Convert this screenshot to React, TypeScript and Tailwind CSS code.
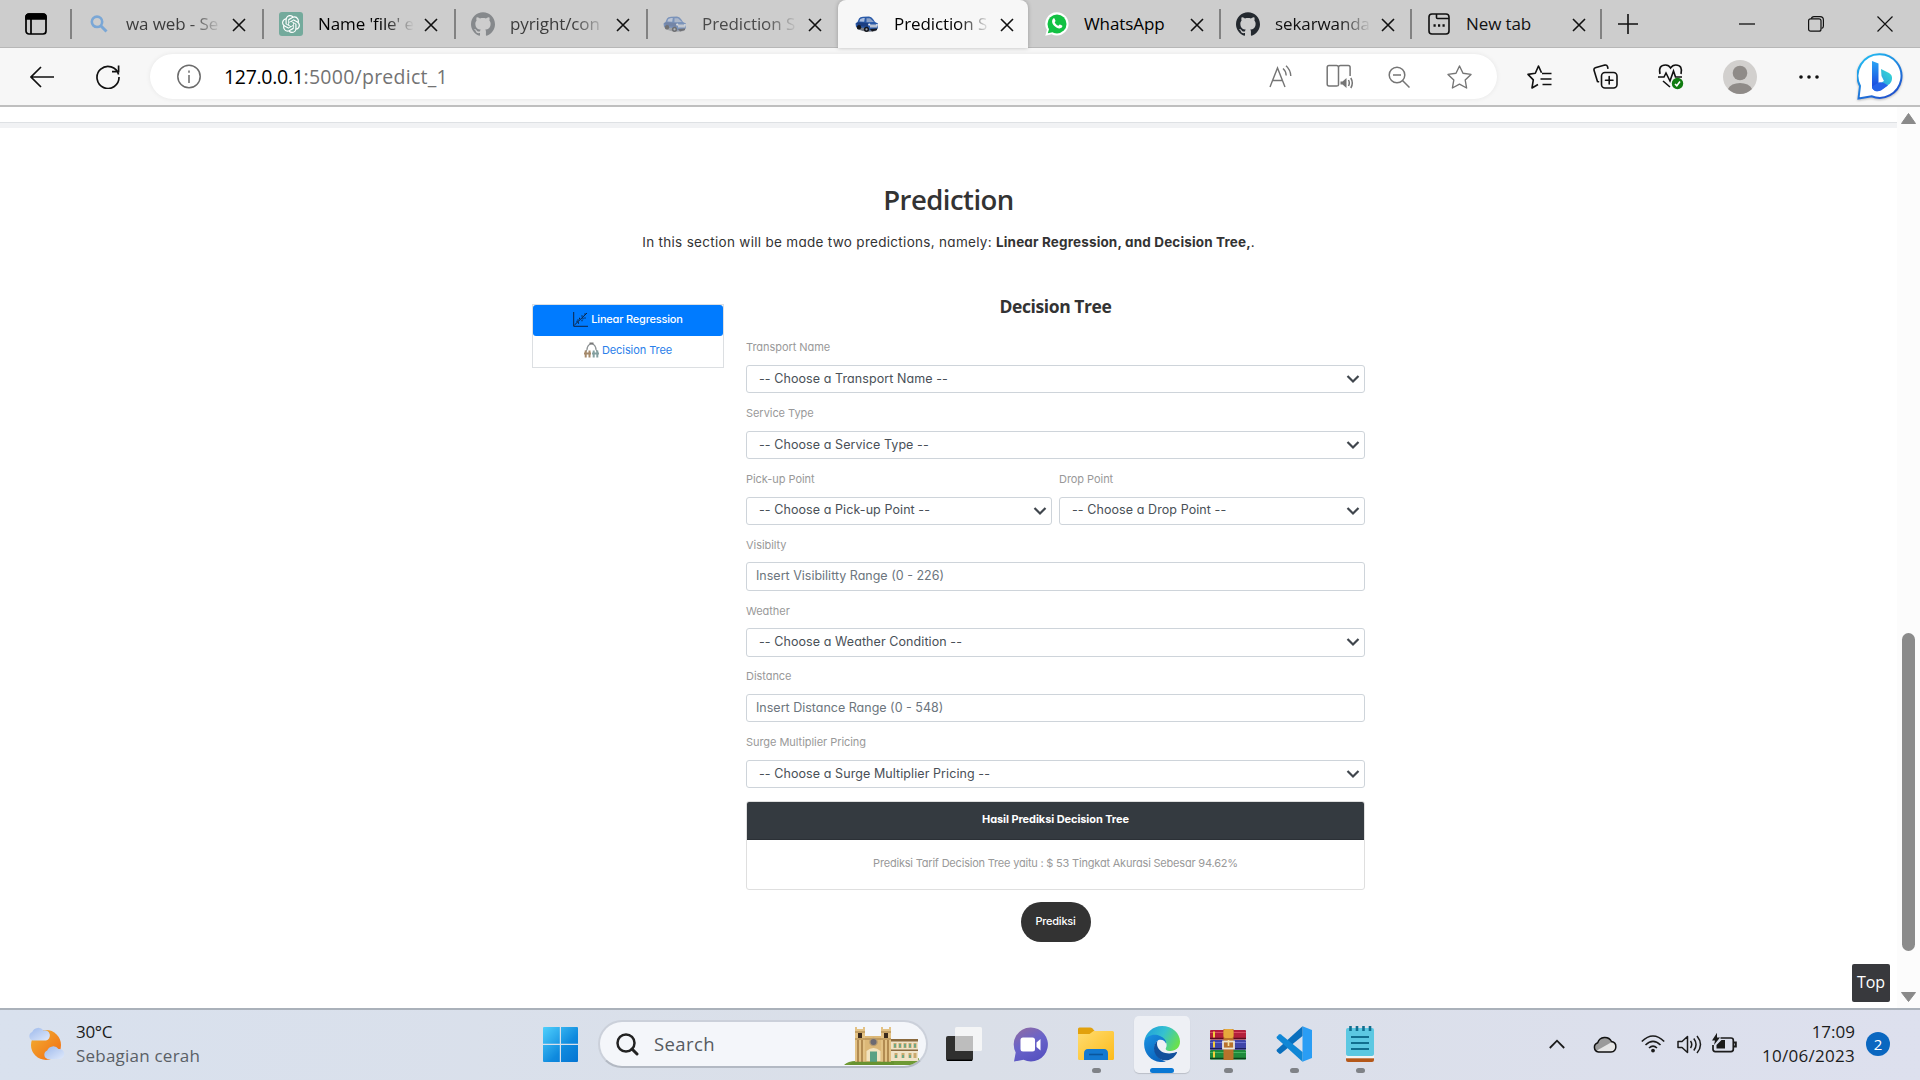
import type { ReactNode } from 'react';
import { SiGithub, SiOpenai } from 'react-icons/si';

const SEGOE = "font-['Open_Sans','Noto_Sans',sans-serif]";
const ROUND = "font-['Inter',sans-serif] [font-feature-settings:'cv11']";

/* ---------- tab strip ---------- */

function CarIcon({ dim = false }: { dim?: boolean }) {
  return (
    <svg width="24" height="17" viewBox="0 0 24 17" className={dim ? 'opacity-50' : ''}>
      <path d="M2 13 Q10 17 21 15 L23 12 L20 10 L3 10Z" fill="#777c86" />
      <path d="M.5 7.500 L2.500 6 L4 2.500 Q5 1 8 .8 L14 .6 Q16.500 .8 18 3 L20 6 L23 7.500 V12 L20 14 L13 14.500 L9 12 L1 11Z" fill="#2a5aa8" />
      <path d="M1 7 L4 6.300 L14 7 L13 11 L4 10Z" fill="#1c3f82" />
      <path d="M5.300 3 L8 2 L9.800 2 L9.200 5.800 L4.300 5.500Z" fill="#a9bcdd" />
      <path d="M11.500 2.200 L15 2.200 L19 6 L11.500 6.300Z" fill="#8ea4c9" />
      <circle cx="4" cy="11.300" r="2.200" fill="#15171c" />
      <circle cx="11.500" cy="13.300" r="2.600" fill="#15171c" />
      <circle cx="11.500" cy="13.300" r="1.100" fill="#9aa3b2" />
      <path d="M15 8.500 H22.500 V11.500 H15Z" fill="#b9c2d2" />
      <path d="M15 13 L22 12.500 V14 L17 15.500Z" fill="#16181f" />
      <circle cx="14.200" cy="8.600" r="1.100" fill="#e8edf5" />
      <circle cx="22" cy="8.800" r=".9" fill="#e8edf5" />
    </svg>
  );
}

function Close() {
  return (
    <svg width="14" height="14" viewBox="0 0 14 14" fill="none" stroke="#111" strokeWidth="1.600">
      <path d="M1 1 13 13M13 1 1 13" />
    </svg>
  );
}

type TabInfo = { w: string; sep: boolean; icon: ReactNode; text: string; tone: string; active?: boolean; fade?: boolean };

const TABS: TabInfo[] = [
  {
    w: 'w-[192px]', sep: true, text: 'wa web - Se', tone: 'text-[#3c3c3c]', fade: true,
    icon: (
      <svg width="18" height="18" viewBox="0 0 18 18" fill="none" stroke="#7aa7d6" strokeWidth="2.600">
        <circle cx="7" cy="6.800" r="5.200" />
        <path d="m11 11 5.500 5.500" strokeWidth="3" />
      </svg>
    ),
  },
  {
    w: 'w-[192px]', sep: true, text: "Name 'file' e", tone: 'text-black', fade: true,
    icon: (
      <span className="flex size-6 items-center justify-center rounded-[3px] bg-[#74aa9c]">
        <SiOpenai className="size-[18px] text-white" />
      </span>
    ),
  },
  { w: 'w-[192px]', sep: true, text: 'pyright/con', tone: 'text-[#3c3c3c]', fade: true, icon: <SiGithub className="size-6 text-[#86898c]" /> },
  { w: 'w-[192px]', sep: true, text: 'Prediction S', tone: 'text-[#4a4a4a]', fade: true, icon: <CarIcon dim /> },
  { w: 'w-[190px]', sep: false, text: 'Prediction S', tone: 'text-black', fade: true, icon: <CarIcon />, active: true },
  {
    w: 'w-[191px]', sep: false, text: 'WhatsApp', tone: 'text-black',
    icon: (
      <svg width="24" height="24" viewBox="0 0 24 24">
        <path d="M12 .3a11.600 11.600 0 1 1-5.400 21.900L.3 23.800l1.600-6A11.600 11.600 0 0 1 12 .3Z" fill="#fff" />
        <circle cx="12" cy="11.900" r="9.500" fill="#12c143" />
        <path d="M2.800 21.300 4.600 15l4.200 5Z" fill="#12c143" />
        <path d="M8.300 6.600c.4-.4 1-.4 1.300.2l.9 2c.2.5-.6 1.200-.8 1.500.8 1.700 2 2.800 3.700 3.500.5-.4 1-1.500 1.600-1.200l2 1c.6.3.3 1.500-.2 2-1.500 1.300-3.500.9-5.400-.2-2.300-1.300-4.100-3.600-4.300-5.500-.1-1.300.5-2.700 1.200-3.300Z" fill="#fff" />
      </svg>
    ),
  },
  { w: 'w-[191px]', sep: true, text: 'sekarwanda', tone: 'text-[#111]', fade: true, icon: <SiGithub className="size-6 text-[#24292f]" /> },
  {
    w: 'w-[190px]', sep: true, text: 'New tab', tone: 'text-[#111]',
    icon: (
      <svg width="22" height="22" viewBox="0 0 22 22" fill="none" stroke="#111" strokeWidth="1.600">
        <rect x="1" y="1" width="20" height="20" rx="3" />
        <path d="M8.500 1v3.500q0 1 1 1H21" />
        <path d="M5.500 12.500h2.200M10 12.500h2.200M14.500 12.500h2.200" strokeWidth="2.400" />
      </svg>
    ),
  },
];

function Tab({ t }: { t: TabInfo }) {
  return (
    <div
      className={`${t.w} flex h-12 shrink-0 items-center ${
        t.active ? 'rounded-t-lg bg-[#f7f7f7] shadow-[0_0_4px_rgba(0,0,0,0.25)]' : ''
      }`}
    >
      <span className={`h-[30px] w-[2px] ${t.sep ? 'bg-[#828282]' : ''}`} />
      <span className="ml-[15px] flex w-6 justify-center">{t.icon}</span>
      <span
        className={`ml-[15px] w-[97px] text-[17px] leading-6 tracking-[-0.1px] whitespace-nowrap ${t.tone} ${
          t.fade ? '[mask-image:linear-gradient(to_right,#000_66%,transparent_99%)]' : ''
        }`}
      >
        {t.text}
      </span>
      <span className="mt-[2px] ml-[9px]">
        <Close />
      </span>
    </div>
  );
}

function TabStrip() {
  return (
    <div className="flex h-12 items-center bg-[#cdcdcd] shadow-[inset_0_-1px_0_#b7b7b7]">
      <div className="flex w-[70px] justify-center pl-[2px]">
        <svg width="22" height="22" viewBox="0 0 22 22" fill="none" stroke="#000" strokeWidth="1.700">
          <rect x="1" y="1" width="20" height="20" rx="3" />
          <path d="M1 6V4a3 3 0 0 1 3-3h14a3 3 0 0 1 3 3v2Z" fill="#000" />
          <path d="M6 6v15" />
        </svg>
      </div>
      {TABS.map((t, i) => (
        <Tab key={i} t={t} />
      ))}
      <span className="h-[30px] w-[2px] bg-[#828282]" />
      <svg className="ml-[16px]" width="20" height="20" viewBox="0 0 20 20" stroke="#111" strokeWidth="1.600">
        <path d="M10 0v20M0 10h20" />
      </svg>
      <svg className="ml-[101px]" width="16" height="16" viewBox="0 0 16 16" stroke="#111" strokeWidth="1.300">
        <path d="M0 8h16" />
      </svg>
      <svg className="ml-[53px]" width="16" height="16" viewBox="0 0 16 16" fill="none" stroke="#111" strokeWidth="1.200">
        <rect x=".6" y="2.800" width="12.400" height="12.400" rx="2" />
        <path d="M3.400 2.800Q3.600.6 6 .6h6q3.400 0 3.400 3.400v6q0 2-1.800 2.500" />
      </svg>
      <svg className="ml-[53px]" width="16" height="16" viewBox="0 0 16 16" stroke="#111" strokeWidth="1.200">
        <path d="M.5.5l15 15M15.500.5l-15 15" />
      </svg>
    </div>
  );
}

/* ---------- address row ---------- */

function Toolbar() {
  return (
    <div className="flex h-[57px] items-center bg-[#f7f7f7]">
      <svg className="ml-[30px]" width="24" height="22" viewBox="0 0 24 22" fill="none" stroke="#111" strokeWidth="1.700">
        <path d="M24 11H1M11 1 1 11l10 10" />
      </svg>
      <svg className="ml-[42px]" width="24" height="25" viewBox="0 0 24 25" fill="none" stroke="#111" strokeWidth="1.700">
        <path d="M22.600 10.500A11 11 0 1 0 23 13M22.600 1.500v6.200H16" />
      </svg>
      <div className="ml-[30px] flex h-[45px] w-[1347px] items-center rounded-full bg-white shadow-[0_0_5px_rgba(0,0,0,0.07)]">
        <svg className="ml-[27px]" width="24" height="25" viewBox="0 0 24 25" fill="none" stroke="#6b6b6b" strokeWidth="1.500">
          <circle cx="12" cy="12.500" r="11.200" />
          <path d="M12 11v8M12 6.500v2.200" />
        </svg>
        <div className="ml-[23px] flex-1 text-[19.5px] leading-7 whitespace-nowrap text-[#737373]">
          <span className="tracking-[-0.3px] text-black">127.0.0.1</span>
          <span className="tracking-[0.25px]">:5000/predict_1</span>
        </div>
        <div className="mr-[25px] flex items-center text-[#757575]">
          <svg width="24" height="23" viewBox="0 0 24 23" fill="none" stroke="currentColor" strokeWidth="1.400">
            <path d="M1 22 8.500 3 16 22M3.600 15.500h9.800" />
            <path d="M14 3.500q3 2.500 3.200 7M17 .8q4.500 4 4.800 10.200" />
          </svg>
          <svg className="ml-[33px]" width="28" height="26" viewBox="0 0 28 26" fill="none" stroke="currentColor" strokeWidth="1.500">
            <path d="M12.500 3.500q0-2-2-2H3q-1.800 0-1.800 2V20q0 2 1.800 2h7.500q2 0 2-1V3.500q0-2 2-2h7.800q1.800 0 1.800 2V12M12.500 21v-1" />
            <path d="M14.500 17.500h2l4-3.500v10l-4-3.500h-2Z" fill="currentColor" stroke="none" />
            <path d="M22.500 16q1.600 3 0 6M24.800 14q3 5 0 10" />
          </svg>
          <svg className="ml-[34px]" width="22" height="22" viewBox="0 0 22 22" fill="none" stroke="currentColor" strokeWidth="1.500">
            <circle cx="9" cy="9" r="7.800" />
            <path d="m14.500 14.500 7 7M5 9h8" />
          </svg>
          <svg className="ml-[37px]" width="25" height="24" viewBox="0 0 25 24" fill="none" stroke="currentColor" strokeWidth="1.400" strokeLinejoin="round">
            <path d="m12.500 1 3.500 7.300 8 1.100-5.800 5.600 1.400 8-7.100-3.800L5.400 23l1.400-8L1 9.400l8-1.100Z" />
          </svg>
        </div>
      </div>
      <svg className="ml-[30px]" width="25" height="24" viewBox="0 0 25 24" fill="none" stroke="#111" strokeWidth="1.600" strokeLinejoin="round">
        <path d="M14.500 7.800 11.500 1 8.300 8.300 1 9.400l5.300 5.500L5 23l6-3.500M15 8.500h9.500M13.500 14H24.500M15.500 19.500h9" />
      </svg>
      <svg className="ml-[41px]" width="25" height="25" viewBox="0 0 25 25" fill="none" stroke="#111" strokeWidth="1.600" strokeLinecap="round">
        <rect x="8.500" y="8.500" width="15.500" height="15.500" rx="3.500" />
        <path d="M16.200 12.500v7.500M12.500 16.200H20M5.500 17.800l-1-.3-3.400-11q-.6-2 1.200-2.700l9.500-2.700q2-.5 2.700 1.400l.4 1.700" />
      </svg>
      <svg className="ml-[40px]" width="26" height="26" viewBox="0 0 26 26" fill="none" stroke="#111" strokeWidth="1.600">
        <path d="M2 10q-2-9 5.500-9 3.500 0 5 3 2-3 5.300-3Q25 1 23 10M0 13h6l2-4 4 8 3.500-10 2 6H24M5 17l7 6" />
        <circle cx="19.500" cy="19.500" r="5.700" fill="#117c10" stroke="none" />
        <path d="m17 20 1.800 1.700 3.200-4.200" stroke="#fff" />
      </svg>
      <svg className="ml-[39px]" width="34" height="34" viewBox="0 0 34 34">
        <circle cx="17" cy="17" r="17" fill="#d2d0ce" />
        <circle cx="17" cy="13" r="7.300" fill="#8f8b88" />
        <path d="M5 29a12.500 8.500 0 0 1 24 0 17 17 0 0 1-24 0Z" fill="#8f8b88" />
      </svg>
      <svg className="ml-[42px]" width="20" height="4" viewBox="0 0 20 4" fill="#111">
        <circle cx="2" cy="2" r="1.800" />
        <circle cx="10" cy="2" r="1.800" />
        <circle cx="18" cy="2" r="1.800" />
      </svg>
      <svg className="ml-[38px] drop-shadow-[0_1px_1px_rgba(0,0,0,0.25)]" width="46" height="47" viewBox="0 0 46 47">
        <defs>
          <linearGradient id="bingRing" x1="0" y1="0" x2=".6" y2="1">
            <stop offset="0" stopColor="#22c4f5" />
            <stop offset="1" stopColor="#1f55cf" />
          </linearGradient>
          <linearGradient id="bingStem" x1="0" y1="0" x2="0" y2="1">
            <stop offset="0" stopColor="#2aa5f5" />
            <stop offset="1" stopColor="#1a44dd" />
          </linearGradient>
          <linearGradient id="bingBowl" x1="1" y1="0" x2="0" y2="1">
            <stop offset="0" stopColor="#35e0d0" />
            <stop offset="1" stopColor="#2a7af0" />
          </linearGradient>
        </defs>
        <path d="M23 1.200a21.800 21.800 0 1 1-8.500 42L1.500 45.500 3 33A21.800 21.800 0 0 1 23 1.200Z" fill="#fff" stroke="url(#bingRing)" strokeWidth="2" />
        <path d="m15 8 6.500 2.500v20L15 35Z" fill="url(#bingStem)" />
        <path d="m24 16 8 4q3.500 2 3 6-.5 4-4 6l-7 5q-3 2-6 1l-3-3 12-7-2.500-5Z" fill="url(#bingBowl)" />
        <path d="m15 33.500 6.500-4q4-1 9.500 3l-7 5Q18 40 15 35Z" fill="#2563e8" />
      </svg>
    </div>
  );
}

/* ---------- prediction page ---------- */

function Chevron() {
  return (
    <svg className="ml-auto mr-[4px]" width="14" height="10" viewBox="0 0 14 10" fill="none" stroke="#40464d" strokeWidth="2.200">
      <path d="m1.500 2 5.500 5.500L12.500 2" />
    </svg>
  );
}

function Field({ label, value, input = false }: { label: string; value: string; input?: boolean }) {
  return (
    <div className="h-[65.6px] flex-1">
      <div className="h-[18px] text-[11px] leading-[18px] tracking-[-0.05px] text-[#999]">{label}</div>
      <div
        className={`mt-[8.5px] flex h-[28.5px] items-center rounded-[3px] border border-[#ced4da] bg-white text-[12.5px] whitespace-nowrap ${
          input ? 'pl-[9px] text-[#6c757d]' : 'pl-[12px] tracking-[0.08px] text-[#495057]'
        }`}
      >
        <span>{value}</span>
        {!input && <Chevron />}
      </div>
    </div>
  );
}

function ModelList() {
  return (
    <div className="mt-[9.5px] h-[64px] w-[192px] shrink-0 border border-[#dcdfe2] text-[11px]">
      <div className="flex h-[31px] items-center justify-center rounded-[3px] bg-[#007bff] pb-px font-medium tracking-[-0.2px] text-white">
        <svg className="mr-[3px]" width="15" height="15" viewBox="0 0 15 15" fill="none" stroke="#0d2547" strokeWidth="1">
          <path d="M.7 0v14.300H15M1.500 13 14 1" />
          <path d="M3.500 9.500h1M6 6.500h1M5 11h1M8.500 4h1M8.500 8.500h1M11.500 2h1M11.500 6h1M9.500 6.500h1M4.500 8h1" strokeWidth="1.500" />
        </svg>
        Linear Regression
      </div>
      <div className="flex h-[29px] items-center justify-center tracking-[-0.08px] text-[#2a80ea]">
        <svg className="mr-[3px]" width="15" height="16" viewBox="0 0 15 16" fill="none" strokeWidth="1.300">
          <path d="M7.500 1.500Q3 3 3 8M7.500 1.500Q12 3 12 8M3.500 6.500 1.500 10M11.500 6.500l2 3.500" stroke="#8b9092" />
          <path d="M5.500 1.500h4" stroke="#777" strokeWidth="2" />
          <path d="M1.700 8.500v7M5.500 8.500v7M0 11.500h7" stroke="#a5896a" strokeWidth="2" />
          <path d="M9.700 8.500v7M13.300 8.500v7M8 11.500h7" stroke="#84a0a0" strokeWidth="2" />
        </svg>
        Decision Tree
      </div>
    </div>
  );
}

function Page() {
  return (
    <div className="flex h-[901px] bg-white">
      <div className="flex min-w-0 flex-1 flex-col">
        <div className="mt-[15px] h-[6px] shrink-0 border-t border-[#dee1e4] bg-[#f1f2f4]" />
        <h2 className="mt-[52px] h-10 text-center text-[27.5px] leading-10 font-semibold tracking-[-0.52px] text-[#333]">Prediction</h2>
        <p className={`${ROUND} mt-[10px] h-6 text-center text-[13.5px] leading-6 whitespace-nowrap text-[#333]`}>
          <span className="tracking-[0.3px]">In this section will be made two predictions, namely: </span>
          <b className="tracking-[0.15px]">Linear Regression, and Decision Tree,</b>.
        </p>
        <div className={`${ROUND} mx-auto mt-[40px] flex w-[833px] flex-1 justify-between`}>
          <ModelList />
          <div className="flex w-[619px] flex-col">
            <h3 className={`${SEGOE} mb-[20.4px] h-6 text-center text-[17.5px] leading-6 font-bold tracking-[-0.42px] text-[#333]`}>Decision Tree</h3>
            <Field label="Transport Name" value="-- Choose a Transport Name --" />
            <Field label="Service Type" value="-- Choose a Service Type --" />
            <div className="flex gap-[7px]">
              <Field label="Pick-up Point" value="-- Choose a Pick-up Point --" />
              <Field label="Drop Point" value="-- Choose a Drop Point --" />
            </div>
            <Field label="Visibilty" value="Insert Visibilitty Range (0 - 226)" input />
            <Field label="Weather" value="-- Choose a Weather Condition --" />
            <Field label="Distance" value="Insert Distance Range (0 - 548)" input />
            <Field label="Surge Multiplier Pricing" value="-- Choose a Surge Multiplier Pricing --" />
            <div className="mt-[2px] h-[89px] shrink-0 overflow-hidden rounded-[3px] border border-[#dfdfdf] text-center text-[11px]">
              <div className="h-[38px] border-b border-[#2b3036] bg-[#343a40] leading-[35px] font-bold tracking-[-0.08px] text-white">
                Hasil Prediksi Decision Tree
              </div>
              <div className="leading-[46px] tracking-[-0.2px] text-[#999]">
                Prediksi Tarif Decision Tree yaitu : $ 53 Tingkat Akurasi Sebesar 94.62%
              </div>
            </div>
            <div className="mx-auto mt-[12px] flex h-[40px] w-[70px] shrink-0 items-center justify-center rounded-[20px] bg-[#333] pb-[2px] text-[11px] font-medium tracking-[-0.25px] text-white">
              Prediksi
            </div>
            <div className="flex-1" />
          </div>
        </div>
      </div>
      <div className="relative flex w-[23px] flex-col items-center bg-[#fcfcfc]">
        <svg className="mt-[6px]" width="15" height="11" viewBox="0 0 15 11">
          <path d="M7.500.5 14.500 10.500H.5Z" fill="#8a8a8a" stroke="#8a8a8a" strokeLinejoin="round" />
        </svg>
        <div className="mt-[509px] h-[318px] w-[13px] rounded-full bg-[#8b8b8b]" />
        <svg className="mt-[41px]" width="15" height="10" viewBox="0 0 15 10">
          <path d="M7.500 9.500.5.5h14Z" fill="#8a8a8a" stroke="#8a8a8a" strokeLinejoin="round" />
        </svg>
        <div className="absolute top-[857px] right-[30px] flex h-[38px] w-[38px] items-center justify-center rounded-[2px] bg-[#38393d] pb-[3px] text-[16px] text-white">
          Top
        </div>
      </div>
    </div>
  );
}

/* ---------- taskbar ---------- */

function Weather() {
  return (
    <svg width="37" height="34" viewBox="0 0 37 34">
      <defs>
        <linearGradient id="sun" x1="0" y1="0" x2="1" y2="1">
          <stop offset="0" stopColor="#f2b233" />
          <stop offset="1" stopColor="#f26a12" />
        </linearGradient>
        <linearGradient id="cloud" x1="0" y1="0" x2="1" y2="1">
          <stop offset="0" stopColor="#9db9ec" />
          <stop offset="1" stopColor="#dfe9fb" />
        </linearGradient>
      </defs>
      <circle cx="18" cy="18" r="15" fill="url(#sun)" />
      <path d="M4.500 13.500a4.500 4.500 0 0 1-.3-8.500A6.500 6.500 0 0 1 15.500 3.500a5 5 0 0 1 2.500 10Z" fill="url(#cloud)" />
      <path d="M19.500 32a4.500 4.500 0 0 1-.3-8.500 6.500 6.500 0 0 1 11.300-1.500A5 5 0 0 1 32 32Z" fill="url(#cloud)" />
    </svg>
  );
}

function Building() {
  return (
    <svg width="76" height="39" viewBox="0 0 76 39">
      <path d="M0 38q4-4 12-4h56l7-3q0 4-4 7Z" fill="#6f9a35" />
      <rect x="47" y="13" width="27" height="21" fill="#efe3c8" />
      <path d="M47 12h27v2.500H47ZM47 22.500h27V24H47Z" fill="#8a6a3f" />
      <path d="M51 16v5M56 16v5M61 16v5M66 16v5M71 16v5M52 26v5M59 26v5M66 26v5M71 26v5" stroke="#c9a96d" strokeWidth="3" />
      <path d="M51 17v3.500M56 17v3.500M61 17v3.500M66 17v3.500M71 17v3.500M52 28v3M59 28v3M66 28v3" stroke="#58a88c" strokeWidth="1.600" />
      <path d="M20 9h19v26H20Z" fill="#dcb878" />
      <path d="M11 0h2v2h6V0h2v35H11Z" fill="#e3c285" />
      <path d="M37 0h2v2h6V0h2v35H37Z" fill="#e3c285" />
      <path d="M14 13v22M18 13v22M40 13v22M44 13v22" stroke="#a67e45" strokeWidth="1.600" />
      <path d="M11 4.500h10v1H11ZM37 4.500h10v1H37ZM11 11.500h36v1H11Z" fill="#a67e45" />
      <rect x="14" y="6" width="4" height="5" fill="#3b2a1c" />
      <rect x="40" y="6" width="4" height="5" fill="#3b2a1c" />
      <circle cx="29.500" cy="15" r="4.300" fill="#b59a70" />
      <circle cx="29.500" cy="15" r="3" fill="#6c6a72" />
      <path d="M22.500 34V24q7-6 14 0v10Z" fill="#f2e3c0" />
      <path d="M26 35V24.500h7V35Z" fill="#5aa184" />
      <path d="M9 34.500h41V38H5Z" fill="#5f8a2c" opacity=".45" />
    </svg>
  );
}

function ChatIcon() {
  return (
    <svg width="35" height="35" viewBox="0 0 35 35">
      <defs>
        <linearGradient id="chat" x1=".2" y1="0" x2=".7" y2="1">
          <stop offset="0" stopColor="#8d6aa5" />
          <stop offset=".45" stopColor="#6a64c9" />
          <stop offset="1" stopColor="#5550c0" />
        </linearGradient>
      </defs>
      <path d="M17.500.5a17 17 0 1 1-7 32.300L1 34.500l1.700-9A17 17 0 0 1 17.500.5Z" fill="url(#chat)" />
      <rect x="7.500" y="10.500" width="14.500" height="14" rx="2.500" fill="#fff" />
      <path d="m23.500 15.500 4-3.500v11.500l-4-3.500Z" fill="#fff" />
    </svg>
  );
}

function FolderIcon() {
  return (
    <svg width="36" height="34" viewBox="0 0 36 34">
      <defs>
        <linearGradient id="folder" x1="0" y1="0" x2="1" y2="1">
          <stop offset="0" stopColor="#ffdc70" />
          <stop offset="1" stopColor="#fdbb1b" />
        </linearGradient>
      </defs>
      <path d="M0 2q0-1.500 1.500-1.500H12q1.500 0 2.500 1l2.500 3V10H0Z" fill="#e2a10c" />
      <path d="M0 7h11.500l4-3H34.500Q36 4 36 5.500v26q0 1.500-1.500 1.500h-33Q0 33 0 31.500Z" fill="url(#folder)" />
      <path d="M6 33v-6.500Q6 22 10 22h16q4 0 4 4.500V33Z" fill="#1379d0" />
      <path d="M11 27.500h14" stroke="#0a569c" strokeWidth="1.600" />
    </svg>
  );
}

function EdgeIcon() {
  return (
    <svg width="36" height="36" viewBox="0 0 36 36">
      <defs>
        <linearGradient id="edgeTop" x1="0" y1=".2" x2="1" y2=".6">
          <stop offset="0" stopColor="#1f9fdc" />
          <stop offset=".5" stopColor="#35c1d0" />
          <stop offset="1" stopColor="#6be14b" />
        </linearGradient>
        <linearGradient id="edgeLeft" x1="0" y1="0" x2=".6" y2="1">
          <stop offset="0" stopColor="#1b93e2" />
          <stop offset="1" stopColor="#0a63bd" />
        </linearGradient>
      </defs>
      <path d="M.3 15.500C1.500 6.500 9 0 18 0c10.500 0 18 7.500 18 15.500 0 6-4.500 9.500-9.500 9.500-4 0-5.500-1.500-4.500-3.200 2-3.500-.5-8-6-10C9 10 3.500 11 .3 15.500Z" fill="url(#edgeTop)" />
      <path d="M.3 15.500C3 8.500 11 7.500 16 10c5 2.200 6.500 5 6 7.500-1-3.500-4.500-4.500-7.500-3.500-5 3-5.500 11.500-.5 16.500 2 2.500 5 4.500 8 5C10 38.500-1.500 29 .3 15.500Z" fill="url(#edgeLeft)" />
      <path d="M13.500 14.700c-5 4.300-4.500 12 .5 16.800 5.500 5 15 3.500 19-4.800.2-.7-.3-1-.9-.7C25.500 29 15.500 27.500 13.300 20c-.5-2-.3-4 .2-5.300Z" fill="#12509c" />
    </svg>
  );
}

function RarIcon() {
  return (
    <svg width="36" height="33" viewBox="0 0 36 33">
      <rect x="0" y="2" width="36" height="9.500" rx="1" fill="#b3203c" />
      <path d="M0 4.500h36" stroke="#d94c62" strokeWidth="1.200" />
      <path d="M0 10.500h36" stroke="#5c0d1e" strokeWidth="1.600" />
      <rect x="0" y="12" width="36" height="9.500" rx="1" fill="#3f45a8" />
      <path d="M0 14.500h36" stroke="#6b71d0" strokeWidth="1.200" />
      <path d="M0 20.800h36" stroke="#1b1e5d" strokeWidth="1.600" />
      <rect x="0" y="22" width="36" height="9.500" rx="1" fill="#1f8a3b" />
      <path d="M0 24.500h36" stroke="#46b462" strokeWidth="1.200" />
      <path d="M0 30.500h36" stroke="#0b421a" strokeWidth="1.600" />
      <path d="M4 3.500v6M4 13.500v6M4 23.500v6" stroke="#f5cf3e" strokeWidth="2" />
      <rect x="13.500" y="1" width="10" height="31" fill="#b9722b" />
      <rect x="13.500" y="1" width="10" height="9" rx="2" fill="#e6a93b" />
      <rect x="13" y="13.500" width="11" height="7" fill="none" stroke="#e9e4da" strokeWidth="1.800" />
      <path d="M18.500 12v6" stroke="#f6e2a0" strokeWidth="1.600" />
    </svg>
  );
}

function CodeIcon() {
  return (
    <svg width="36" height="36" viewBox="0 0 36 36">
      <path d="M26.500.3 36 4v28l-9.500 3.800Z" fill="#2a9df4" />
      <path d="M26.500.3 1 23.500q-1 1 0 2l2 2q1 .8 2 0L26.500 10Z" fill="#0a6fbd" />
      <path d="M26.500 35.800 1 12.500q-1-1 0-2l2-2q1-.8 2 0L26.500 26Z" fill="#1087d6" />
    </svg>
  );
}

function NotepadIcon() {
  return (
    <svg width="28" height="36" viewBox="0 0 28 36">
      <path d="M0 31h28v3q0 2-2 2H2q-2 0-2-2Z" fill="#b4581a" />
      <path d="M0 29h28v3.300H0Z" fill="#f3f3f3" />
      <rect x="0" y="2" width="28" height="28" rx="2" fill="#5cc8e2" />
      <path d="M4.500 0v5M11 0v5M17.500 0v5M24 0v5" stroke="#116e8f" strokeWidth="2.600" />
      <path d="M5 11h18M5 17h18M5 23h18" stroke="#116e8f" strokeWidth="2" />
    </svg>
  );
}

function TaskButton({ children, state = 'none' }: { children: ReactNode; state?: 'none' | 'open' | 'active' }) {
  return (
    <div
      className={`flex h-[57px] w-[56px] flex-col items-center rounded-[5px] pt-[10px] ${
        state === 'active' ? 'bg-[#eef0f5] shadow-[0_1px_1px_rgba(0,0,0,0.15)]' : ''
      }`}
    >
      <div className="flex h-9 items-center justify-center">{children}</div>
      {state === 'open' && <span className="mt-[6px] h-[5px] w-[9px] rounded-full bg-[#7f8287]" />}
      {state === 'active' && <span className="mt-[6px] h-[5px] w-6 rounded-full bg-[#0a78d4]" />}
    </div>
  );
}

function Taskbar() {
  return (
    <div className="flex h-[72px] items-start border-t-2 border-[#aab1ba] bg-gradient-to-r from-[#d9e1ee] via-[#dadfe8] to-[#dde0ee] pt-[6px]">
      <div className="flex w-[543px] shrink-0 items-center pt-[4px] pl-[28px] text-[17px]">
        <Weather />
        <div className="ml-[11px] leading-6">
          <div className="tracking-[-0.3px] text-[#1b1b1b]">30°C</div>
          <div className="tracking-[0.22px] text-[#5a5f66]">Sebagian cerah</div>
        </div>
      </div>
      <svg className="mt-[11px]" width="35" height="35" viewBox="0 0 35 35">
        <defs>
          <linearGradient id="win" x1="0" y1="0" x2="1" y2="1">
            <stop offset="0" stopColor="#4fd0fc" />
            <stop offset=".6" stopColor="#0f8ade" />
            <stop offset="1" stopColor="#0474d2" />
          </linearGradient>
        </defs>
        <path d="M1 0h15.800v16.800H0V1Q0 0 1 0ZM18 0h16q1 0 1 1v15.800H18ZM0 18h16.800v17H1q-1 0-1-1ZM18 18h17v16q0 1-1 1H18Z" fill="url(#win)" />
      </svg>
      <div className="mt-[4px] ml-[20px] flex h-[48px] w-[330px] shrink-0 items-center overflow-hidden rounded-full border-2 border-[#cbd0da] border-b-[#b3b9c3] bg-[#f4f6fa]">
        <svg className="ml-[16px]" width="23" height="23" viewBox="0 0 23 23" fill="none" stroke="#222" strokeWidth="2.500" strokeLinecap="round">
          <circle cx="10" cy="10" r="8.500" />
          <path d="m16 16 5 5" strokeWidth="3" />
        </svg>
        <span className="ml-[15px] text-[18.5px] tracking-[0.38px] text-[#565a60]">Search</span>
        <span className="mt-[5px] mr-[6px] ml-auto">
          <Building />
        </span>
      </div>
      <div className="ml-[8px] flex gap-[10px]">
        <TaskButton>
          <svg width="36" height="35" viewBox="0 0 36 35">
            <rect x="0" y="9" width="27" height="25" rx="2" fill="#30302f" />
            <path d="M1 33.300h25" stroke="#000" strokeWidth="1.400" />
            <rect x="9" y="0" width="27" height="24" rx="1.500" fill="#f6f6f6" opacity=".92" />
            <path d="M9 9h18v15H10.500Q9 24 9 22.500Z" fill="#bdbdbd" />
          </svg>
        </TaskButton>
        <TaskButton>
          <ChatIcon />
        </TaskButton>
        <TaskButton state="open">
          <FolderIcon />
        </TaskButton>
        <TaskButton state="active">
          <EdgeIcon />
        </TaskButton>
        <TaskButton state="open">
          <RarIcon />
        </TaskButton>
        <TaskButton state="open">
          <CodeIcon />
        </TaskButton>
        <TaskButton state="open">
          <NotepadIcon />
        </TaskButton>
      </div>
      <div className="ml-auto flex h-[56px] items-center pr-[30px]">
        <svg width="16" height="10" viewBox="0 0 16 10" fill="none" stroke="#1b1b1b" strokeWidth="1.800">
          <path d="m.8 9 7.200-7.300L15.200 9" />
        </svg>
        <svg className="ml-[28px]" width="24" height="17" viewBox="0 0 24 17">
          <path d="M5.500 16a4.800 4.800 0 0 1-.8-9.300A7.500 7.500 0 0 1 18.500 5.500 5.300 5.300 0 0 1 18 16Z" fill="#9b9b9b" />
          <path d="M3 15 18 6.500q5 0 5 4.500-.5 5-5 5H5.500Z" fill="#e6e6e6" />
          <path d="M5.500 16a4.800 4.800 0 0 1-.8-9.300A7.500 7.500 0 0 1 18.500 5.500 5.300 5.300 0 0 1 18 16Z" fill="none" stroke="#111" strokeWidth="1.500" />
        </svg>
        <svg className="ml-[24px]" width="24" height="18" viewBox="0 0 24 18" fill="none" stroke="#1b1b1b" strokeWidth="1.600">
          <path d="M.8 6.500q11.200-11 22.400 0M4.500 10q7.500-7.300 15 0M8 13q4-3.600 8 0" />
          <circle cx="12" cy="15.600" r="1.900" fill="#1b1b1b" stroke="none" />
        </svg>
        <svg className="ml-[12px]" width="25" height="21" viewBox="0 0 25 21" fill="none" stroke="#1b1b1b" strokeWidth="1.500" strokeLinejoin="round">
          <path d="M1 7.500h4l5.500-5v16l-5.500-5H1Z" />
          <path d="M13.500 7q2.500 3.500 0 7M16.800 4.500q4.500 6 0 12M20 2q7 8.500 0 17" />
        </svg>
        <svg className="mb-[2px] ml-[10px]" width="25" height="20" viewBox="0 0 25 20" fill="none" stroke="#1b1b1b" strokeWidth="1.700">
          <path d="M8.500 5H19q2.300 0 2.300 2.300v9Q21.300 18.600 19 18.600H3.200Q1 18.600 1 16.300V12" />
          <path d="M22 9.500h1.800v4H22" strokeWidth="2" />
          <path d="M4.500 15.500V12l5-5H13v8.500Z" fill="#1b1b1b" stroke="none" />
          <path d="M5-.2 0 7.500h3L2 12l6-7.500H5Z" fill="#1b1b1b" stroke="none" />
        </svg>
        <div className="w-[118px] pb-px text-right text-[17px] leading-6 text-[#1b1b1b]">
          <div>17:09</div>
          <div className="tracking-[0.28px]">10/06/2023</div>
        </div>
        <div className="ml-[11px] flex size-6 items-center justify-center rounded-full bg-[#0a67c0] text-[15px] text-white">2</div>
      </div>
    </div>
  );
}

export default function App() {
  return (
    <div className={`${SEGOE} h-[1080px] w-[1920px] overflow-hidden bg-white`}>
      <TabStrip />
      <Toolbar />
      <div className="h-[2px] bg-[#bfbfbf]" />
      <Page />
      <Taskbar />
    </div>
  );
}
